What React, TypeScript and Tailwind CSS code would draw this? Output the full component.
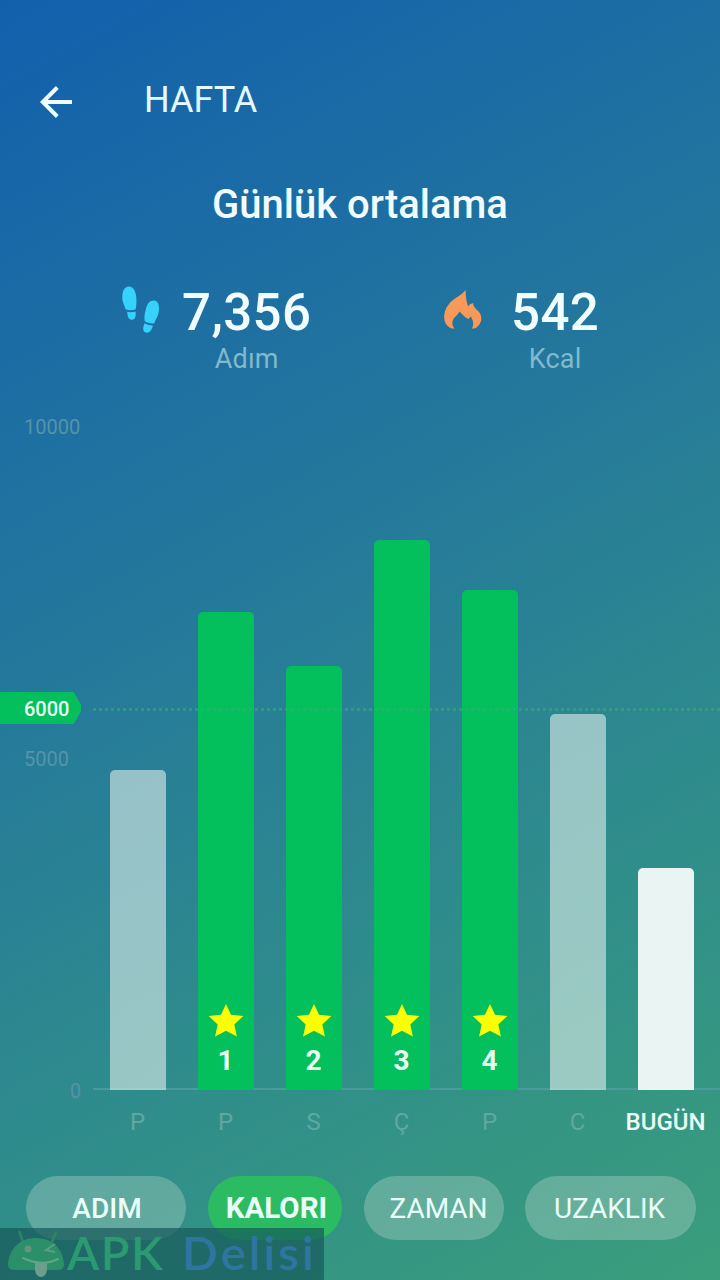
type Day = { label: string; height: string; kind: 'goal' | 'missed' | 'today'; streak?: number };

const days: Day[] = [
  { label: 'P', height: 'h-[320px]', kind: 'missed' },
  { label: 'P', height: 'h-[478px]', kind: 'goal', streak: 1 },
  { label: 'S', height: 'h-[424px]', kind: 'goal', streak: 2 },
  { label: 'Ç', height: 'h-[550px]', kind: 'goal', streak: 3 },
  { label: 'P', height: 'h-[500px]', kind: 'goal', streak: 4 },
  { label: 'C', height: 'h-[376px]', kind: 'missed' },
  { label: 'BUGÜN', height: 'h-[222px]', kind: 'today' },
];

const barColor = {
  goal: 'bg-[#03c05c]',
  missed: 'bg-[#e0eeeb]/60',
  today: 'bg-[#eaf4f2]',
};

function BackArrow() {
  return (
    <svg className="h-[34px] w-[34px]" viewBox="0 0 34 34" fill="none" stroke="#effcff" strokeWidth="4">
      <path d="M33 17H4M18.300 2.500L3.800 17L18.300 31.500" />
    </svg>
  );
}

function Steps() {
  return (
    <svg className="h-[48px] w-[40px]" viewBox="0 0 40 48" fill="#35d2fb">
      <path d="M7.500 0.500C11.800 0.200 14.500 4.300 15.200 10.500C15.700 15 15.500 19 14.700 23.200C11.500 24.700 8 24.700 4.500 23.200C3.700 19.500 1.200 16.500 1.300 11C1.400 5 3.500 0.800 7.500 0.500Z" />
      <path d="M6.200 25.800Q10.500 26.800 14.500 25.400C15.200 30 14.500 33.300 11 33.700C7.300 34 6.500 30 6.200 25.800Z" />
      <path d="M33 14.500C37.300 14.900 38.400 19 38 24.500C37.600 29.500 34.700 33.300 33.200 37.300C29.800 37.900 26.700 37 23.700 35.300C23.100 31.300 23.500 27.300 25 22.500C26.500 17.200 29 14.100 33 14.500Z" />
      <path d="M23.500 37.300Q27.500 39.600 31.900 39.600C30.800 44 28.700 47.500 25 46.500C21.300 45.500 21.900 41.300 23.500 37.300Z" />
    </svg>
  );
}

function Flame() {
  return (
    <svg className="h-[40px] w-[40px]" viewBox="0 0 40 40" fill="#f79a59">
      <path d="M23.500 1C23.800 6 24 11.500 26 17.500C27.500 15 29.500 14.800 31.200 14.300C31.200 18 34 20 36.500 22.500C41.500 28 39.500 36 32.500 39.500H30C32.200 35.500 31 31 28.800 27.500L26.500 30L23.500 28.500L17.500 22.500C16 26 12 28 10.800 31.500C9.800 34.500 10.500 37.300 12.500 39.500H10C4 37 1.500 32 2.300 26C3.200 18.500 7.500 13 14.500 8.500C17.500 6.500 21.300 4.500 23.500 1Z" />
    </svg>
  );
}

function Star() {
  return (
    <svg className="h-[34px] w-[36px]" viewBox="0 0 36 34" fill="#fcff00">
      <path d="M18 0L23 10.700L35.300 12L26.300 20.400L28.900 32.500L18 26.700L7.100 32.500L9.700 20.400L0.700 12L13 10.700Z" />
    </svg>
  );
}

function Stat({ icon, value, unit }: { icon: React.ReactNode; value: string; unit: string }) {
  return (
    <div className="flex items-start">
      {icon}
      <div className="flex flex-col items-center">
        <span className="text-[51px] leading-[56px] font-medium tracking-[0.4px] text-[#f2fdff]">{value}</span>
        <span className="text-[27px] leading-[36px] tracking-[0.2px] text-[#81b9ce]">{unit}</span>
      </div>
    </div>
  );
}

function Watermark() {
  return (
    <div className="absolute bottom-0 left-0 flex h-[52px] w-[324px] items-end bg-[#17585a]/70 pl-[7px]">
      <svg className="h-[51px] w-[58px] shrink-0" viewBox="0 0 58 51" fill="none">
        <path d="M16 13L12.500 3M45 13L49 3" stroke="#2b8665" strokeWidth="2.500" strokeLinecap="round" />
        <path d="M1 35C2 20 13 9 29 9S56 20 57 35Q57 41 51 41H7Q1 41 1 35Z" fill="#2b9069" />
        <circle cx="21" cy="20" r="3.500" fill="#62947f" />
        <path d="M48 15L39 21L48 23" stroke="#5d9c85" strokeWidth="2" />
        <path d="M16 29Q35 38 51 30" stroke="#61a588" strokeWidth="2" strokeLinecap="round" />
        <path d="M28 34H40V41Q39 48 34 48T28 41Z" fill="#6c9e8c" />
      </svg>
      <span className="flex font-['Lato',sans-serif] text-[47px] leading-[56px] font-semibold whitespace-nowrap">
        <span className="w-[117px] pl-[2px] tracking-[1.500px] text-[#2b9a70]">APK</span>
        <span className="tracking-[3.200px] text-[#2f75a2]">Delisi</span>
      </span>
    </div>
  );
}

export default function App() {
  return (
    <main className="relative flex h-[1280px] w-[720px] flex-col overflow-hidden bg-[linear-gradient(151deg,#1260ad_0%,#22759e_36%,#2e8b8d_68%,#3a9e7b_100%)] font-['Roboto',sans-serif]">
      <header className="flex h-[168px] items-center gap-[71px] pt-[35px] pl-[39px]">
        <BackArrow />
        <h1 className="-mt-[4px] text-[36px] leading-[44px] font-normal text-[#e5faff]">HAFTA</h1>
      </header>

      <h2 className="mt-[13px] text-center text-[40px] leading-[48px] font-medium text-[#f0fcff]">Günlük ortalama</h2>

      <section className="flex h-[188px] pt-[56px] pl-[121px]">
        <div className="w-[321px]">
          <Stat icon={<div className="mt-px mr-[21px]"><Steps /></div>} value="7,356" unit="Adım" />
        </div>
        <Stat icon={<div className="mt-[4px] mr-[29px]"><Flame /></div>} value="542" unit="Kcal" />
      </section>

      <section className="flex h-[673px] shrink-0">
        <div className="flex w-[93px] shrink-0 flex-col text-[20px] leading-[20px] text-[#5594aa]">
          <span className="pl-[24px]">10000</span>
          <div className="mt-[255px] flex h-[32px] w-[81px] shrink-0 items-center bg-[#03c05c] pt-[2px] pl-[24px] font-medium text-[#eafff5] [clip-path:polygon(0_0,91%_0,100%_40%,100%_60%,91%_100%,0_100%)]">6000</div>
          <span className="mt-[25px] pl-[24px]">5000</span>
          <span className="mt-[312px] pl-[70px]">0</span>
        </div>
        <div className="relative flex flex-1 items-end gap-[32px] pl-[17px]">
          <div className="absolute inset-x-0 bottom-0 h-[2px] bg-[#4a9b9b]" />
          {days.map((day, i) => (
            <div key={i} className={`relative flex w-[56px] shrink-0 flex-col items-center justify-end rounded-t-[5px] ${day.height} ${barColor[day.kind]}`}>
              {day.streak && (
                <>
                  <Star />
                  <span className="mt-[7px] mb-[13px] pr-px text-[28px] leading-[32px] font-bold text-[#e8fff2]">{day.streak}</span>
                </>
              )}
            </div>
          ))}
          <div className="absolute inset-x-0 top-[291px] h-[3px] bg-[repeating-linear-gradient(90deg,#35ab7b_0_3px,transparent_3px_6px)] opacity-60" />
        </div>
      </section>

      <div className="flex h-[86px] gap-[32px] pt-[18px] pl-[110px] text-[24px] leading-[28px]">
        {days.map((day, i) => (
          <span key={i} className={`flex w-[56px] shrink-0 justify-center pr-px ${day.kind === 'today' ? 'font-medium text-[#edfff8]' : 'text-[#5ea9a1]'}`}>{day.label}</span>
        ))}
      </div>

      <nav className="flex h-[64px] shrink-0 pl-[26px] text-[28px] text-[#eafff9]">
        <button className="h-full w-[160px] rounded-full bg-[#aacfc2]/40 pt-px pl-[2px] font-medium">ADIM</button>
        <button className="ml-[22px] h-full w-[134px] rounded-full bg-[#2bbc63] pt-px pl-[3px] text-[29.500px] font-bold">KALORI</button>
        <button className="ml-[22px] h-full w-[140px] rounded-full bg-[#aacfc2]/40 pt-px pl-[9px]">ZAMAN</button>
        <button className="ml-[21px] h-full w-[171px] rounded-full bg-[#aacfc2]/40 pt-px pr-[2px]">UZAKLIK</button>
      </nav>

      <Watermark />
    </main>
  );
}
